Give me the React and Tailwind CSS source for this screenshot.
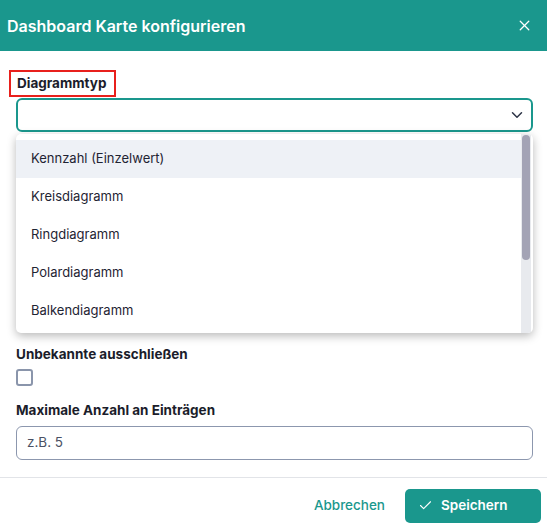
import React from 'react';
import { X, ChevronDown, Check } from 'lucide-react';

const options = ['Kennzahl (Einzelwert)', 'Kreisdiagramm', 'Ringdiagramm', 'Polardiagramm', 'Balkendiagramm'];

export default function App() {
  return (
    <div className="w-[547px] h-[528px] bg-white flex flex-col overflow-hidden" style={{ fontFamily: 'Inter, "Noto Sans", sans-serif' }}>
      {/* Header */}
      <div className="h-[51px] bg-[#1a978d] flex items-center justify-between pl-[7px] pr-[14px] shrink-0">
        <h2 className="text-[16px] font-semibold text-white">Dashboard Karte konfigurieren</h2>
        <X className="w-[17px] h-[17px] text-white" strokeWidth={1.75} />
      </div>

      {/* Body */}
      <div className="flex-1 pl-[16px] pr-[14px] pt-[19px]">
        <div className="inline-flex border-2 border-[#e8201c] pl-[6px] pr-[8px] h-[27px] items-center -ml-[7px]">
          <span className="text-[13.5px] font-bold text-[#1b1d2b]">Diagrammtyp</span>
        </div>

        <div className="relative mt-[1px]">
          <div className="h-[34px] border-2 border-[#1a978d] rounded-[6px] flex items-center justify-end pr-[5px]">
            <ChevronDown className="w-[18px] h-[18px] text-[#2d3447]" strokeWidth={2} />
          </div>

          {/* Dropdown menu */}
          <div className="absolute left-0 right-0 top-[36px] h-[199px] bg-white rounded-[5px] shadow-[0_3px_10px_rgba(0,0,0,0.28)] overflow-hidden z-10">
            <div className="pt-[6px] pr-[12px]">
              {options.map((opt, i) => (
                <div
                  key={opt}
                  className={`h-[38px] flex items-center pl-[15px] text-[13px] text-[#1f2433] ${i === 0 ? 'bg-[#eef1f6]' : ''}`}
                >
                  {opt}
                </div>
              ))}
            </div>
            <div className="absolute right-[2px] top-0 bottom-0 w-[10px] bg-[#e8eaee]">
              <div className="h-[125px] w-[8px] mx-auto mt-[1px] rounded-full bg-[#a3a3b5]"></div>
            </div>
          </div>
        </div>

        <div className="mt-[212px] text-[13.5px] font-bold text-[#1b1d2b]">Unbekannte ausschließen</div>
        <div className="mt-[5px] w-[17px] h-[17px] border-2 border-[#8a95ab] rounded-[3px]"></div>

        <div className="mt-[14px] text-[13.5px] font-bold text-[#1b1d2b]">Maximale Anzahl an Einträgen</div>
        <div className="mt-[5px] h-[34px] border border-[#8c97ae] rounded-[6px] flex items-center px-[10px]">
          <span className="text-[13.5px] text-[#4a5163]">z.B. 5</span>
        </div>
      </div>

      {/* Footer */}
      <div className="border-t border-[#e2e4e8] h-[51px] flex items-center justify-end pr-[6px] pt-[5px] gap-[4px] shrink-0">
        <button className="px-[16px] h-[34px] text-[13.5px] font-medium text-[#1a978d]">Abbrechen</button>
        <button className="w-[136px] h-[34px] rounded-[5px] bg-[#1a978d] text-white text-[13.5px] font-semibold flex items-center pl-[13px] gap-[8px]">
          <Check className="w-[15px] h-[15px]" strokeWidth={1.75} />
          Speichern
        </button>
      </div>
    </div>
  );
}
